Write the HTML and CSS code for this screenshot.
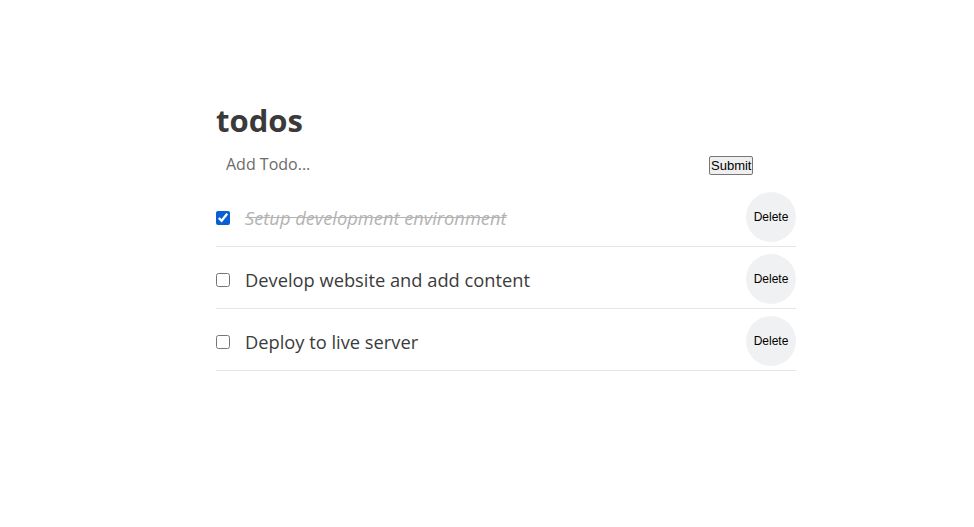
FILE: index.html
```html
<!DOCTYPE html>
<html>
<head>
<meta charset="utf-8">
<link rel="stylesheet" href="styles.css">
</head>
<body>
<main class="app">
  <h1 class="title">todos</h1>
  <form class="add-form">
    <input class="add-input" type="text" placeholder="Add Todo...">
    <button class="submit" type="button">Submit</button>
  </form>
  <ul class="list">
    <li class="item">
      <input class="check" type="checkbox" checked>
      <span class="text done">Setup development environment</span>
      <button class="delete" type="button">Delete</button>
    </li>
    <li class="item">
      <input class="check" type="checkbox">
      <span class="text">Develop website and add content</span>
      <button class="delete" type="button">Delete</button>
    </li>
    <li class="item">
      <input class="check" type="checkbox">
      <span class="text">Deploy to live server</span>
      <button class="delete" type="button">Delete</button>
    </li>
  </ul>
</main>
</body>
</html>
```

FILE: styles.css
```css
html, body {
  margin: 0;
  padding: 0;
  background: #fff;
}
body {
  font-family: "Open Sans", "Noto Sans", sans-serif;
  color: #3b3b3b;
}
.app {
  width: 580px;
  margin-left: 216px;
  padding-top: 98px;
}
.title {
  margin: 0;
  font-size: 31px;
  font-weight: 700;
  line-height: 44px;
  color: #3a3a3a;
}
.add-form {
  display: flex;
  align-items: center;
  height: 28px;
  margin-top: 8px;
  margin-bottom: 7px;
}
.add-input {
  flex: 0 0 493px;
  border: none;
  outline: none;
  padding: 0 0 0 10px;
  font-family: inherit;
  font-size: 16px;
  color: #333;
  background: transparent;
  height: 28px;
}
.add-input::placeholder {
  color: #6b6b6b;
}
.submit {
  font-family: "Liberation Sans", Arial, sans-serif;
  font-size: 13px;
  padding: 1px 1px;
  margin-top: 2px;
  margin-left: -10px;
  border: 1px solid #767676;
  border-radius: 2px;
  background: #efefef;
  color: #000;
  height: 19px;
  line-height: 15px;
}
.list {
  list-style: none;
  margin: 0;
  padding: 0;
}
.item {
  display: flex;
  align-items: center;
  padding: 7px 0 3px;
  border-bottom: 1px solid #e6e6e6;
}
.check {
  width: 14px;
  height: 14px;
  margin: 0 15px 0 0;
  accent-color: #0b5fd6;
}
.text {
  flex: 1;
  font-size: 18.3px;
  line-height: 24px;
  color: #3b3b3b;
}
.text.done {
  font-style: italic;
  text-decoration: line-through;
  color: #b3b3b3;
}
.delete {
  width: 50px;
  height: 50px;
  margin-bottom: 1px;
  border: none;
  border-radius: 50%;
  background: #f0f1f3;
  font-family: "Liberation Sans", Arial, sans-serif;
  font-size: 12px;
  color: #000;
  padding: 0;
}
```
